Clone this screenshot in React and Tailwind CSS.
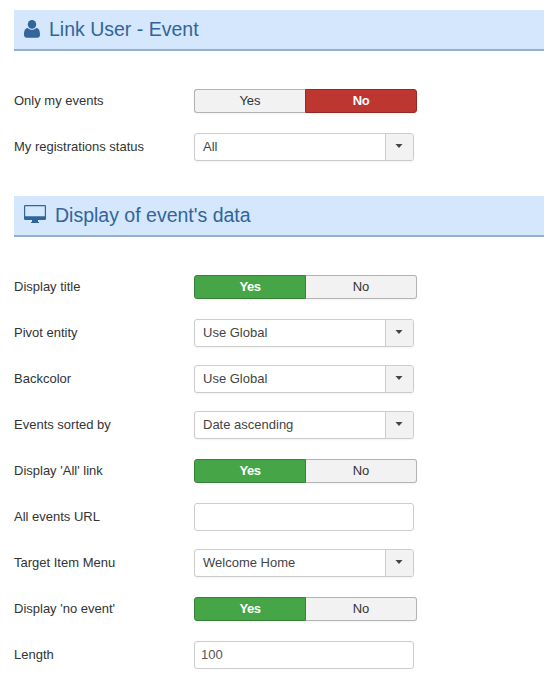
import React from "react";

function UserIcon() {
  return (
    <svg width="16" height="18" viewBox="0 0 16 18" fill="currentColor" className="mb-[2px] shrink-0">
      <ellipse cx="8" cy="4.4" rx="4.2" ry="4.4" />
      <path d="M3.7 8C1 8.2 0 10.8 0 14.6C0 16.7 1 17.8 2.9 17.8H13.1C15 17.8 16 16.7 16 14.6C16 10.8 15 8.2 12.3 8C11.2 9.2 9.8 9.8 8 9.8S4.8 9.2 3.7 8Z" />
    </svg>
  );
}

function ScreenIcon() {
  return (
    <svg width="22" height="18" viewBox="0 0 22 18" fill="currentColor" className="mb-[3px] shrink-0">
      <path
        fillRule="evenodd"
        d="M1.2 0H20.8Q22 0 22 1.2V13.8Q22 15 20.8 15H14V17H15V18H7V17H8V15H1.2Q0 15 0 13.8V1.2Q0 0 1.2 0ZM1.2 1.2V11.2H20.8V1.2Z"
      />
    </svg>
  );
}

function SectionHeader({ icon, children }) {
  return (
    <h2 className="flex h-[41px] items-center gap-[9px] border-b-2 border-[#94aed0] bg-[#d4e7fc] pl-[10px] text-[19.5px] leading-[39px] text-[#31659b]">
      {icon}
      <span className="whitespace-nowrap">{children}</span>
    </h2>
  );
}

function Row({ label, children }) {
  return (
    <div className="flex h-7 items-center">
      <div className="w-[180px] shrink-0 pb-px">{label}</div>
      {children}
    </div>
  );
}

function Toggle({ value }) {
  const base = "h-6 border text-center leading-[22px]";
  const off = "border-[#b3b3b3] bg-[#f2f2f2] text-[#333]";
  const on = "font-bold tracking-[-0.4px] text-white";
  const yes = value ? `border-[#378137] bg-[#46a546] ${on}` : off + " border-r-0";
  const no = value ? off + " border-l-0" : `border-[#942a25] bg-[#bd362f] ${on}`;
  return (
    <div className="flex w-[223px] rounded-[3px] shadow-[0_1px_2px_rgba(0,0,0,0.05)]">
      <button className={`${base} ${yes} ${value ? "w-[112px]" : "w-[111px]"} rounded-l-[3px]`}>Yes</button>
      <button className={`${base} ${no} ${value ? "w-[111px]" : "w-[112px]"} rounded-r-[3px]`}>No</button>
    </div>
  );
}

function Select({ children }) {
  return (
    <div className="flex h-7 w-[220px] overflow-hidden rounded-[3px] border border-[#ccc] bg-white text-[#444] shadow-[0_1px_2px_rgba(0,0,0,0.05)]">
      <span className="flex-1 pl-2 leading-[25px]">{children}</span>
      <span className="flex w-[28px] items-center border-l border-[#ccc] bg-[#f2f2f2] pl-[9px]">
        <svg width="8" height="4" viewBox="0 0 8 4" className="mb-[2px] fill-[#444]">
          <path d="M0.5 0H7.5L4 4Z" />
        </svg>
      </span>
    </div>
  );
}

function Input({ value }) {
  return (
    <input
      defaultValue={value}
      className="h-7 w-[220px] rounded-[3px] border border-[#ccc] bg-white px-[6px] pb-px text-[#555]"
    />
  );
}

export default function App() {
  return (
    <div className="h-[690px] overflow-hidden bg-white pl-[14px] pt-[10px] font-['Liberation_Sans',Arial,sans-serif] text-[13px] leading-[18px] text-[#333]">
      <SectionHeader icon={<UserIcon />}>Link User - Event</SectionHeader>
      <div className="mb-[35px] mt-9 flex flex-col gap-[18px]">
        <Row label="Only my events"><Toggle value={false} /></Row>
        <Row label="My registrations status"><Select>All</Select></Row>
      </div>
      <SectionHeader icon={<ScreenIcon />}>Display of event's data</SectionHeader>
      <div className="mt-9 flex flex-col gap-[18px]">
        <Row label="Display title"><Toggle value /></Row>
        <Row label="Pivot entity"><Select>Use Global</Select></Row>
        <Row label="Backcolor"><Select>Use Global</Select></Row>
        <Row label="Events sorted by"><Select>Date ascending</Select></Row>
        <Row label="Display 'All' link"><Toggle value /></Row>
        <Row label="All events URL"><Input value="" /></Row>
        <Row label="Target Item Menu"><Select>Welcome Home</Select></Row>
        <Row label="Display 'no event'"><Toggle value /></Row>
        <Row label="Length"><Input value="100" /></Row>
      </div>
    </div>
  );
}
